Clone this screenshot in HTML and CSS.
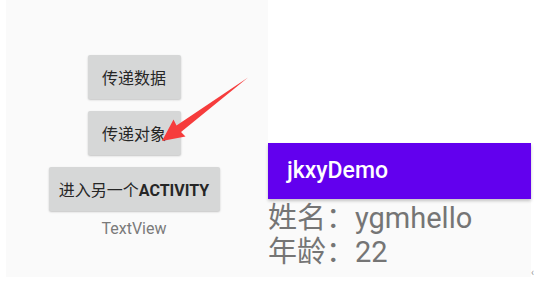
FILE: index.html
```html
<!DOCTYPE html>
<html lang="zh-CN">
<head>
  <meta charset="UTF-8" />
  <title>jkxyDemo</title>
  <meta name="viewport" content="width=device-width, initial-scale=1.0" />
  <link rel="stylesheet" href="styles.css">
</head>
<body>
  <div class="page">
    <!-- First screen: buttons -->
    <section class="screen screen-main">
      <button class="btn btn-short">传递数据</button>
      <button class="btn btn-short">传递对象</button>
      <button class="btn btn-wide">进入另一个<span class="caps">ACTIVITY</span></button>
      <div class="text-view">TextView</div>
    </section>

    <!-- Second screen: result -->
    <section class="screen screen-result">
      <header class="app-bar">jkxyDemo</header>
      <div class="result">
        <p>姓名：ygmhello</p>
        <p>年龄：22</p>
      </div>
    </section>

    <span class="corner-mark">&lsaquo;</span>

    <!-- Red pointer arrow drawn over the screenshot -->
    <svg class="pointer" width="535" height="284" viewBox="0 0 535 284">
      <polygon points="162,141 173.5,119.5 176.5,125.5 248,77.5 181,132 185.5,136.5" fill="#f63c3c" />
    </svg>
  </div>
</body>
</html>
```

FILE: styles.css
```css
body {
  margin: 0;
  background-color: #fff;
  font-family: Roboto, "Noto Sans CJK SC", sans-serif;
}

.page {
  position: relative;
  display: flex;
  align-items: flex-start;
  width: 535px;
  height: 284px;
}

.screen {
  background-color: #fafafa;
}

/* Left screen */
.screen-main {
  display: flex;
  flex-direction: column;
  align-items: center;
  box-sizing: border-box;
  width: 262px;
  height: 277px;
  margin-left: 6px;
  padding: 55px 6px 0 0;
}

.btn {
  height: 44px;
  margin-bottom: 12px;
  padding: 0;
  border: none;
  border-radius: 2px;
  background-color: #d6d7d7;
  color: #262626;
  font-family: Roboto, "Noto Sans CJK SC", sans-serif;
  font-size: 16px;
  box-shadow: 0 1px 2px rgba(0, 0, 0, 0.22);
}

.btn-short {
  width: 93px;
}

.btn-wide {
  width: 171px;
  margin-bottom: 8px;
}

.btn .caps {
  font-weight: bold;
}

.text-view {
  color: #7a7a7a;
  font-size: 16px;
  line-height: 19px;
}

/* Right screen */
.screen-result {
  width: 263px;
  height: 134px;
  margin-top: 143px;
}

.app-bar {
  height: 56px;
  padding-left: 19px;
  background-color: #6200ee;
  color: #fff;
  font-size: 23px;
  font-weight: 500;
  line-height: 56px;
  box-shadow: 0 2px 3px rgba(0, 0, 0, 0.22);
}

.result {
  padding-top: 2px;
  color: #757575;
  font-size: 29px;
  line-height: 34px;
}

.result p {
  margin: 0;
}

.corner-mark {
  align-self: flex-end;
  margin: 0 0 6px 0;
  color: #999;
  font-size: 10px;
  line-height: 10px;
}

.pointer {
  position: absolute;
  left: 0;
  top: 0;
}
```
